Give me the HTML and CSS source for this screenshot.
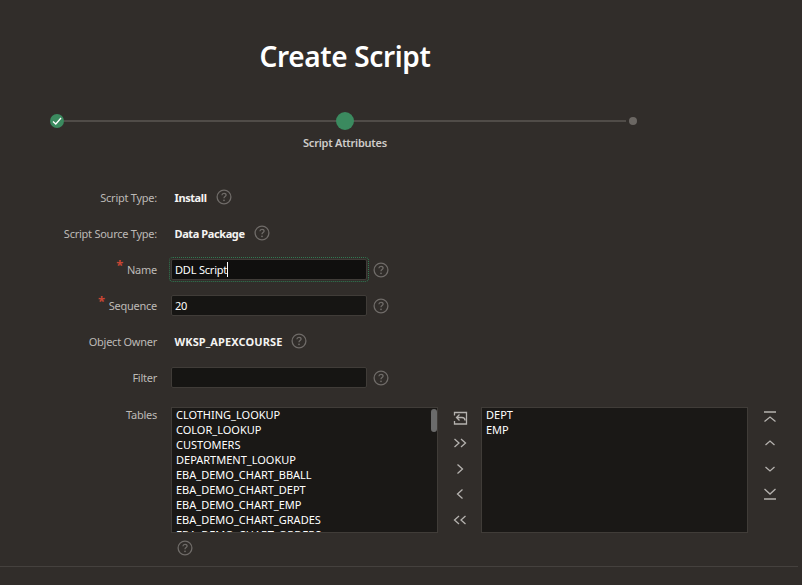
FILE: index.html
```html
<!DOCTYPE html>
<html lang="en">
<head>
    <title>Create Script</title>
    <link rel="stylesheet" href="styles.css">
</head>
<body>
    <div class="wizard">
        <h1>Create Script</h1>

        <!-- Steps -->
        <div class="track">
            <span class="slot">
                <span class="dot dot-done">
                    <svg width="10" height="10" viewBox="0 0 10 10"><path d="M1 5.4 L3.8 8 L9 2" fill="none" stroke="#fff" stroke-width="1.3"/></svg>
                </span>
            </span>
            <span class="line"></span>
            <span class="slot"><span class="dot dot-current"></span></span>
            <span class="line"></span>
            <span class="slot"><span class="dot dot-next"></span></span>
        </div>
        <div class="step-label">Script Attributes</div>
    </div>

    <form class="form">
        <div class="row">
            <label>Script Type:</label>
            <span class="value">Install</span>
            <svg class="help" viewBox="0 0 16 16"><use href="#help"/></svg>
        </div>
        <div class="row">
            <label>Script Source Type:</label>
            <span class="value">Data Package</span>
            <svg class="help" viewBox="0 0 16 16"><use href="#help"/></svg>
        </div>
        <div class="row">
            <label><span class="req">*</span>Name</label>
            <div class="field field-focus">DDL Script<span class="caret"></span></div>
            <svg class="help help-field" viewBox="0 0 16 16"><use href="#help"/></svg>
        </div>
        <div class="row">
            <label><span class="req">*</span>Sequence</label>
            <div class="field">20</div>
            <svg class="help help-field" viewBox="0 0 16 16"><use href="#help"/></svg>
        </div>
        <div class="row">
            <label>Object Owner</label>
            <span class="value value-caps">WKSP_APEXCOURSE</span>
            <svg class="help" viewBox="0 0 16 16"><use href="#help"/></svg>
        </div>
        <div class="row">
            <label>Filter</label>
            <div class="field"></div>
            <svg class="help help-field" viewBox="0 0 16 16"><use href="#help"/></svg>
        </div>

        <!-- Shuttle -->
        <div class="row row-shuttle">
            <label>Tables</label>
            <div class="shuttle">
                <div class="list">
                    <div>CLOTHING_LOOKUP</div>
                    <div>COLOR_LOOKUP</div>
                    <div>CUSTOMERS</div>
                    <div>DEPARTMENT_LOOKUP</div>
                    <div>EBA_DEMO_CHART_BBALL</div>
                    <div>EBA_DEMO_CHART_DEPT</div>
                    <div>EBA_DEMO_CHART_EMP</div>
                    <div>EBA_DEMO_CHART_GRADES</div>
                    <div>EBA_DEMO_CHART_ORDERS</div>
                    <span class="scroll-thumb"></span>
                </div>
                <div class="moves">
                    <svg viewBox="0 0 16 16"><path d="M2.5 5.5V2.5H14.5V14H2.5V11M13 10.5C13 8.5 11.5 7.5 10 7.5H4.5M7.5 4.5L4.5 7.5L7.5 10.5"/></svg>
                    <svg viewBox="0 0 16 16"><path d="M2.5 4L7 8L2.5 12M9 4L13.5 8L9 12"/></svg>
                    <svg viewBox="0 0 16 16"><path d="M5.5 3.5L10.5 8L5.5 12.5"/></svg>
                    <svg viewBox="0 0 16 16"><path d="M10.5 3.5L5.5 8L10.5 12.5"/></svg>
                    <svg viewBox="0 0 16 16"><path d="M7 4L2.5 8L7 12M13.5 4L9 8L13.5 12"/></svg>
                </div>
                <div class="list">
                    <div>DEPT</div>
                    <div>EMP</div>
                </div>
                <div class="moves">
                    <svg viewBox="0 0 16 16"><path d="M2 2H14M2.5 11.5L8 7L13.5 11.5"/></svg>
                    <svg viewBox="0 0 16 16"><path d="M3.5 10L8 6L12.5 10"/></svg>
                    <svg viewBox="0 0 16 16"><path d="M3.5 6L8 10L12.5 6"/></svg>
                    <svg viewBox="0 0 16 16"><path d="M2.5 3L8 8L13.5 3M2 13H14"/></svg>
                </div>
            </div>
        </div>
        <div class="row-after">
            <svg class="help" viewBox="0 0 16 16"><use href="#help"/></svg>
        </div>
    </form>

    <div class="footer"></div>

    <!-- Help icon -->
    <svg class="defs" width="0" height="0">
        <symbol id="help" viewBox="0 0 16 16">
            <circle cx="8" cy="8" r="6.9" fill="none" stroke="#6f6b68" stroke-width="1.3"/>
            <path d="M5.9 6.2C6 4.9 6.9 4.3 8 4.3C9.2 4.3 10.1 5 10.1 6.1C10.1 7.6 8 7.6 8 9.3" fill="none" stroke="#6f6b68" stroke-width="1.3"/>
            <circle cx="8" cy="11.3" r="0.9" fill="#6f6b68"/>
        </symbol>
    </svg>
</body>
</html>
```

FILE: styles.css
```css
/* Dark page */
body {
    margin: 0;
    height: 585px;
    overflow: hidden;
    background-color: #312d2a;
    color: #fff;
    font-family: "Noto Sans", Arial, sans-serif;
    font-size: 11px;
}

.wizard {
    width: 690px;
    padding-top: 34px;
    text-align: center;
}

h1 {
    margin: 0;
    font-size: 28px;
    line-height: 44px;
    font-weight: 600;
    letter-spacing: -0.35px;
}

.track {
    display: flex;
    align-items: center;
    height: 20px;
    margin: 33px 50px 0;
}

.slot {
    position: relative;
    display: flex;
    align-items: center;
    justify-content: center;
    flex: none;
    width: 14px;
}

.line {
    flex: 1;
    height: 2px;
    background-color: #504c48;
}

.dot {
    display: flex;
    align-items: center;
    justify-content: center;
    flex: none;
    border-radius: 50%;
}

.dot-done {
    width: 14px;
    height: 14px;
    background-color: #3b8a5f;
}

.dot-current {
    width: 18px;
    height: 18px;
    background-color: #3b8a5f;
}

.dot-next {
    width: 8px;
    height: 8px;
    background-color: #6b6763;
}

.step-label {
    margin-top: 2px;
    line-height: 20px;
    font-weight: 600;
    letter-spacing: -0.25px;
    color: #cfccc9;
}

.form {
    margin-top: 26px;
}

.row {
    display: flex;
    align-items: center;
    height: 36px;
}

.row label {
    width: 157px;
    flex: none;
    text-align: right;
    letter-spacing: -0.25px;
    color: #bdbab7;
}

.req {
    margin-right: 4px;
    color: #c74634;
    font-size: 13px;
    font-weight: 700;
    vertical-align: 4px;
    line-height: 0;
}

.value {
    margin-left: 17.5px;
    font-weight: 700;
    letter-spacing: -0.4px;
    color: #f5f4f2;
}

.value-caps {
    letter-spacing: 0.1px;
}

.help {
    width: 16px;
    height: 16px;
    margin-left: 9px;
}

.help-field {
    margin: 2px 0 0 6px;
}

.field {
    box-sizing: border-box;
    display: flex;
    align-items: center;
    width: 196px;
    height: 21px;
    margin: 1px 0 0 14px;
    padding-left: 3px;
    background-color: #161513;
    border: 1px solid #403c38;
    border-radius: 2px;
    letter-spacing: -0.2px;
}

.field-focus {
    background-color: #100f0e;
    outline: 1px dotted #2f7a52;
    outline-offset: 1px;
}

.caret {
    width: 1px;
    height: 15px;
    background-color: #fff;
}

.row-shuttle {
    align-items: flex-start;
    height: auto;
    padding-top: 12px;
}

.shuttle {
    display: flex;
    margin-left: 14px;
}

.list {
    position: relative;
    box-sizing: border-box;
    width: 267px;
    height: 126px;
    padding: 0 4px;
    overflow: hidden;
    background-color: #1a1816;
    border: 1px solid #403c38;
    line-height: 15px;
}

.list div:first-child {
    margin-top: -1px;
}

.scroll-thumb {
    position: absolute;
    top: 1px;
    right: 0;
    width: 6px;
    height: 23px;
    border-radius: 3px;
    background-color: #6b6b6b;
}

.moves {
    display: flex;
    flex-direction: column;
    align-items: center;
    gap: 9.4px;
    width: 43px;
    padding-top: 3px;
}

.moves svg {
    width: 16px;
    height: 16px;
    fill: none;
    stroke: #b5b2af;
    stroke-width: 1.3;
}

.row-after {
    display: flex;
    padding: 7px 0 0 177px;
}

.row-after .help {
    margin-left: 0;
}

.footer {
    margin-top: 10px;
    margin-right: 4px;
    height: 1px;
    background-color: #45413e;
}

.defs {
    position: absolute;
}
```
